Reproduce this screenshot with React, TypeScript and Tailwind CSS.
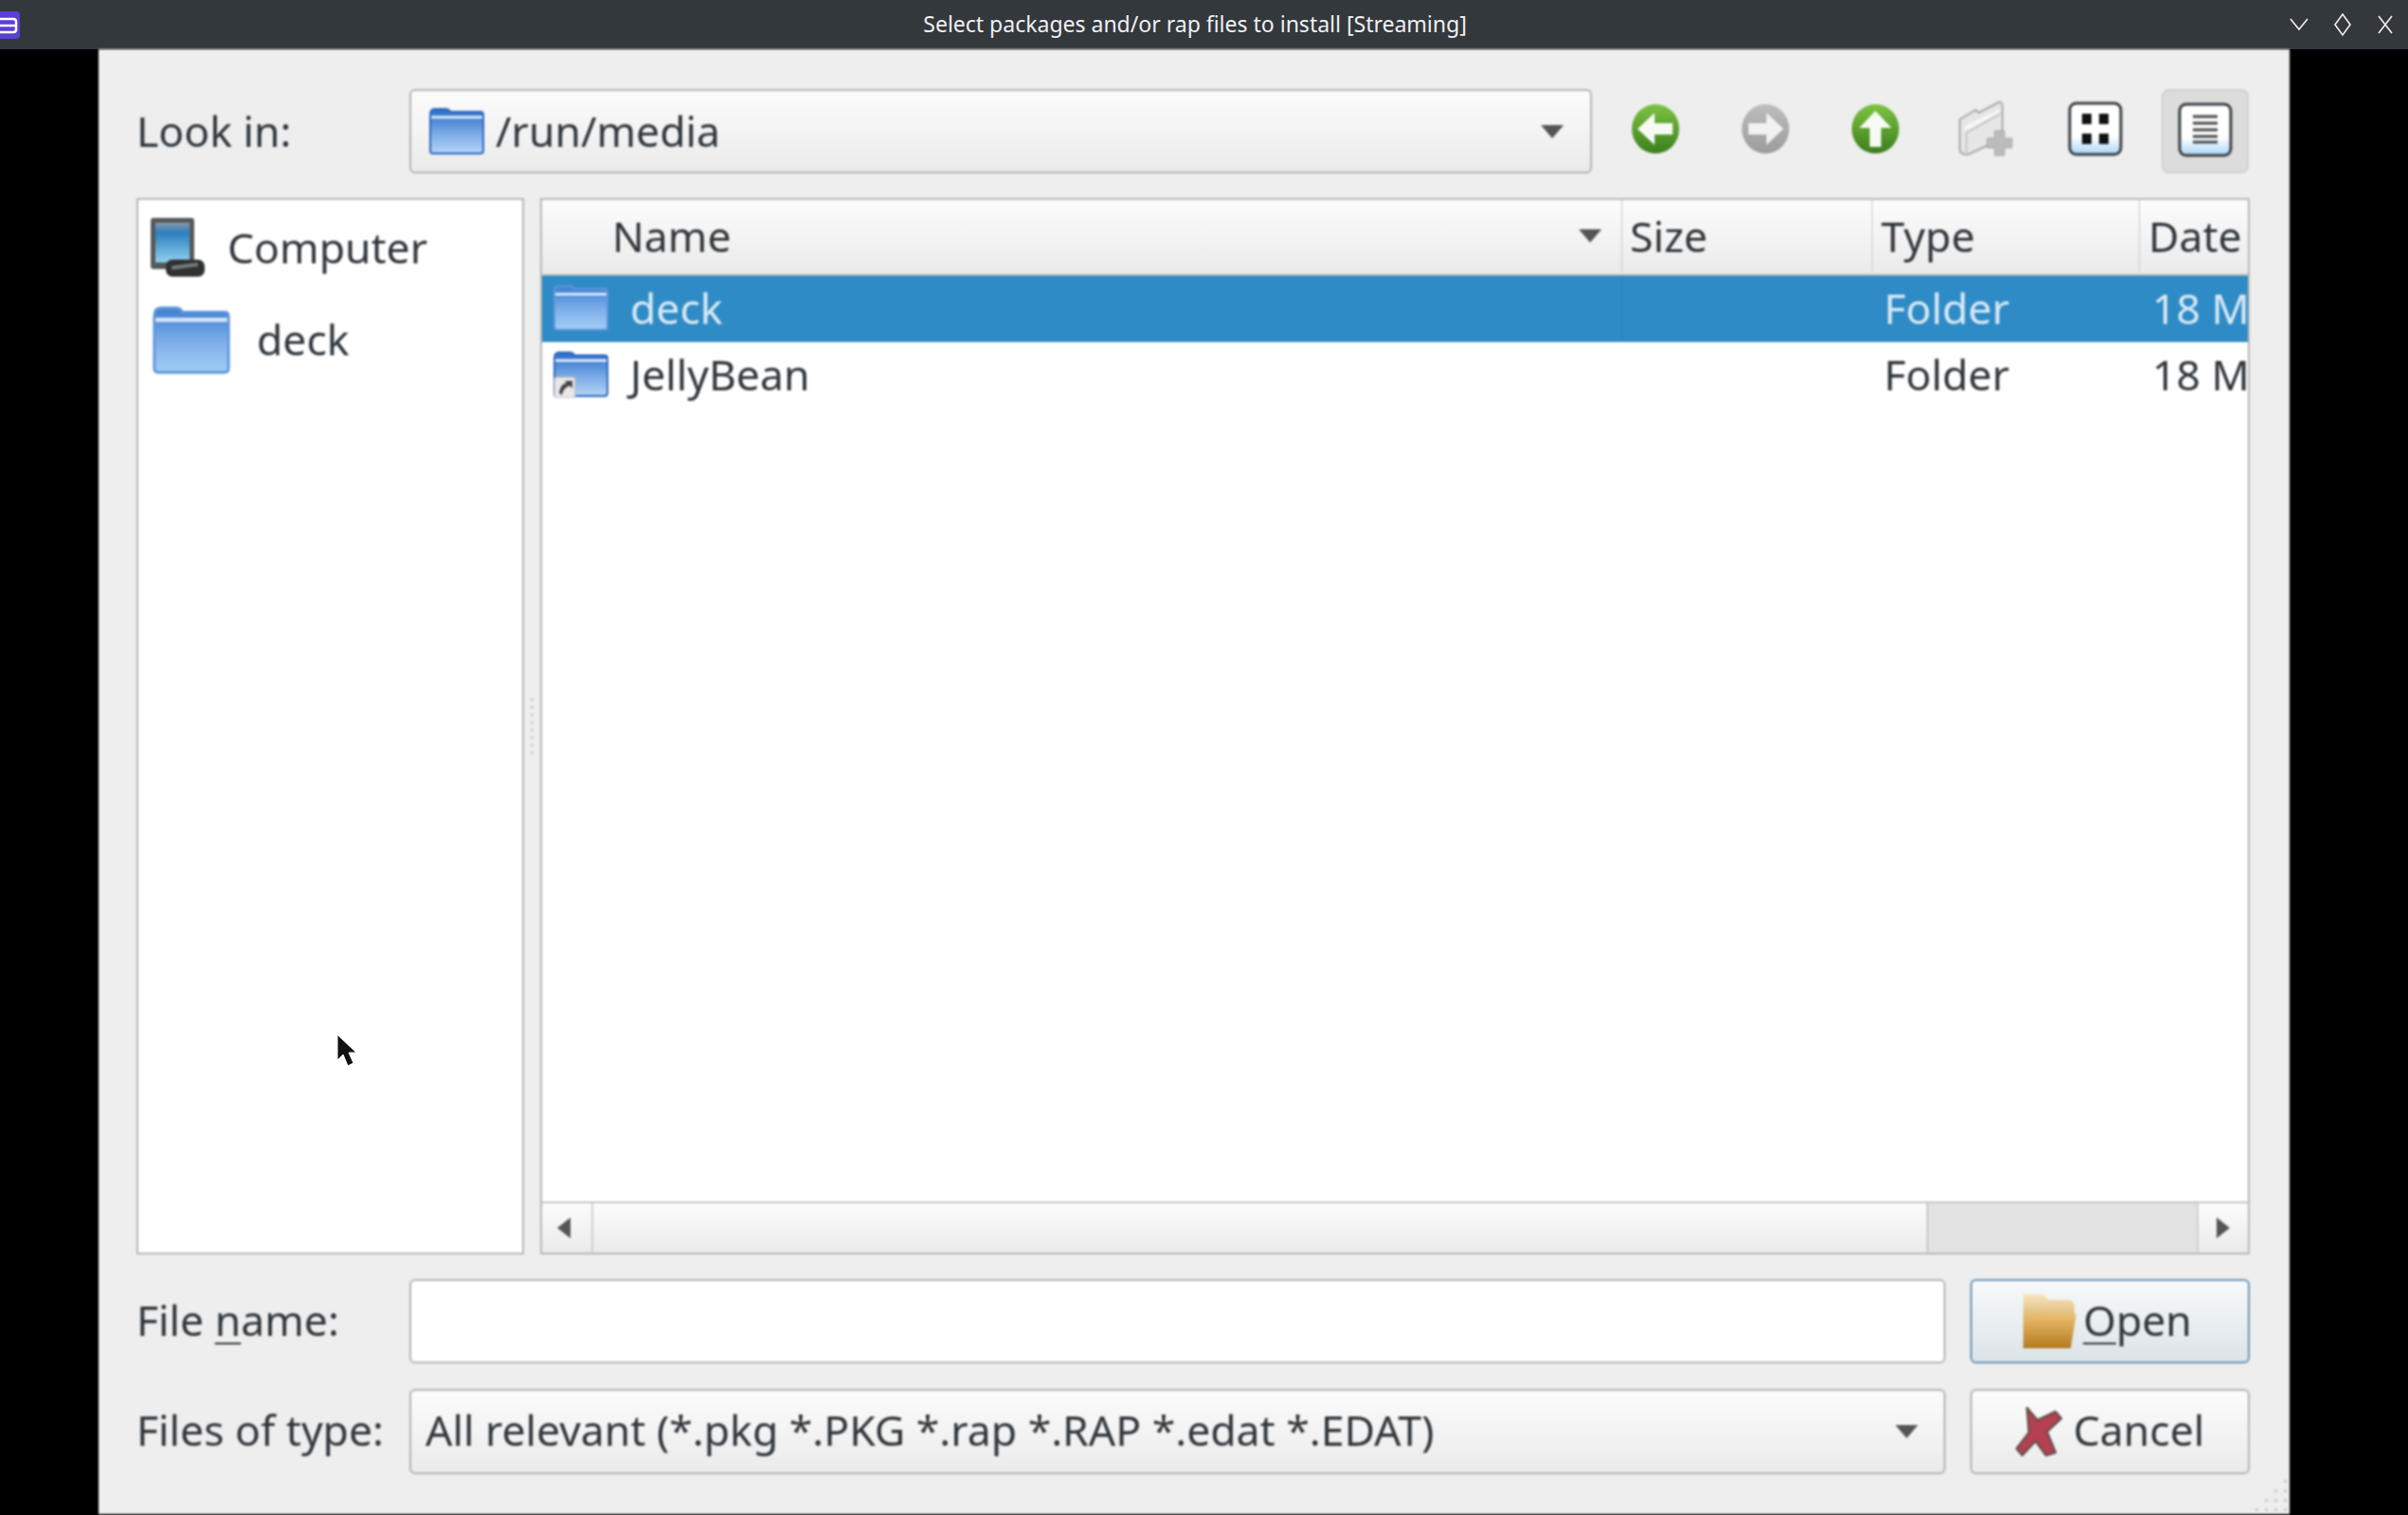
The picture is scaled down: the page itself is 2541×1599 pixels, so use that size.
import React from 'react';

const fontClass = "font-['Noto_Sans','Open_Sans',sans-serif]";

const Folder: React.FC<{ id: string; className: string; light?: boolean; link?: boolean }> = ({ id, className, light, link }) => (
  <svg viewBox="0 0 60 50" preserveAspectRatio="none" className={className}>
    <defs>
      <linearGradient id={id} x1="0" y1="0" x2="0" y2="1">
        <stop offset="0" stopColor={light ? '#3f7fd0' : '#2a6cc8'} />
        <stop offset="0.55" stopColor={light ? '#7fb0ea' : '#7aaae6'} />
        <stop offset="1" stopColor={light ? '#a4cdf6' : '#b5d4f6'} />
      </linearGradient>
    </defs>
    <path d="M2 8 Q2 2 7 2 H18 Q22 2 23 5 H55 Q58 5 58 8 V45 Q58 48 55 48 H5 Q2 48 2 45 Z" fill={`url(#${id})`} stroke={light ? '#5e96dc' : '#2f69bd'} strokeWidth="2" />
    <rect x="3" y="9" width="54" height="3" fill="#d5e6fa" />
    {link && (
      <g>
        <rect x="2" y="28" width="22" height="22" rx="2" fill="#e8e8e8" stroke="#b0b0b0" />
        <path d="M7 45 C8 38 11 35 15 34 L13 32 H21 V40 L18 37 C14 39 11 41 10 47 Z" fill="#444" />
      </g>
    )}
  </svg>
);

const ComputerIcon = () => (
  <svg viewBox="0 0 60 66" className="w-[60px] h-[66px]">
    <defs>
      <linearGradient id="screen" x1="0" y1="0" x2="0" y2="1">
        <stop offset="0" stopColor="#8a9aa5" />
        <stop offset="0.25" stopColor="#2c7fbf" />
        <stop offset="1" stopColor="#8fd0ee" />
      </linearGradient>
    </defs>
    <rect x="2" y="2" width="46" height="54" rx="3" fill="#55595b" />
    <rect x="7" y="7" width="36" height="42" fill="url(#screen)" />
    <rect x="18" y="46" width="41" height="18" rx="7" fill="#2f3133" />
    <rect x="24" y="51" width="28" height="4" fill="#77797a" transform="rotate(-8 37 53)" />
  </svg>
);

const RoundArrow: React.FC<{ id: string; dir: 'left' | 'right' | 'up'; gray?: boolean }> = ({ id, dir, gray }) => (
  <svg viewBox="0 0 52 54" className="w-[52px] h-[54px]">
    <defs>
      <linearGradient id={id} x1="0" y1="0" x2="0" y2="1">
        <stop offset="0" stopColor={gray ? '#bdbdbd' : '#7cc442'} />
        <stop offset="1" stopColor={gray ? '#9c9c9c' : '#3c7e1c'} />
      </linearGradient>
    </defs>
    <ellipse cx="26" cy="27" rx="25" ry="26" fill={`url(#${id})`} />
    {dir === 'left' && <path d="M7 27 L25 10 V21 H44 V33 H25 V44 Z" fill="#fff" opacity="0.95" />}
    {dir === 'right' && <path d="M45 27 L27 10 V21 H8 V33 H27 V44 Z" fill="#f2f2f2" />}
    {dir === 'up' && <path d="M26 8 L43 26 H32 V46 H20 V26 H9 Z" fill="#fff" opacity="0.95" />}
  </svg>
);

const NewFolderIcon = () => (
  <svg viewBox="0 0 60 60" className="w-[60px] h-[60px]">
    <path d="M3 20 L20 10 L23 13 L44 2 Q47 1 48 5 V40 L12 57 Q4 58 3 52 Z" fill="#e6e6e6" stroke="#ababab" strokeWidth="2" />
    <path d="M8 27 L45 9 V13 L8 33 Z" fill="#f6f6f6" />
    <path d="M10 55 V34 L46 14" fill="none" stroke="#bdbdbd" strokeWidth="1.5" />
    <path d="M40 32 H50 V40 H58 V50 H50 V58 H40 V50 H32 V40 H40 Z" fill="#bcbcbc" stroke="#a2a2a2" />
  </svg>
);

const ViewIcon: React.FC<{ id: string; list?: boolean }> = ({ id, list }) => (
  <svg viewBox="0 0 58 58" className="w-[58px] h-[58px]">
    <defs>
      <linearGradient id={id} x1="0" y1="0" x2="0" y2="1">
        <stop offset="0" stopColor="#ffffff" />
        <stop offset="0.65" stopColor="#ffffff" />
        <stop offset="1" stopColor="#a9d5f8" />
      </linearGradient>
    </defs>
    <rect x="2" y="2" width="54" height="54" rx="7" fill={`url(#${id})`} stroke="#3c4246" strokeWidth="3" />
    {list ? (
      <path d="M16 15 H42 M16 22 H42 M16 29 H42 M16 36 H42 M16 42 H42" stroke="#4a4a4a" strokeWidth="3" />
    ) : (
      <path d="M15 13 H25 V24 H15 Z M33 13 H43 V24 H33 Z M15 34 H25 V45 H15 Z M33 34 H43 V45 H33 Z" fill="#111" />
    )}
  </svg>
);

const DownArrow = () => (
  <svg viewBox="0 0 26 16" className="w-[26px] h-[16px] shrink-0">
    <path d="M1 1 H25 L13 15 Z" fill="#555" />
  </svg>
);

const OpenIcon = () => (
  <svg viewBox="0 0 58 60" className="w-[58px] h-[60px] shrink-0">
    <defs>
      <linearGradient id="openBack" x1="0" y1="0" x2="0" y2="1">
        <stop offset="0" stopColor="#f6e6bf" />
        <stop offset="1" stopColor="#dcae62" />
      </linearGradient>
      <linearGradient id="openFront" x1="0" y1="0" x2="0" y2="1">
        <stop offset="0" stopColor="#ecc072" />
        <stop offset="1" stopColor="#b67a1e" />
      </linearGradient>
    </defs>
    <path d="M1 1 H22 L28 7 H50 Q55 8 55 14 V30 H1 Z" fill="url(#openBack)" />
    <path d="M1 58 V30 Q14 22 24 22 H57 L51 58 Z" fill="url(#openFront)" />
  </svg>
);

const CancelIcon = () => (
  <svg viewBox="0 0 50 54" className="w-[50px] h-[54px] shrink-0">
    <path d="M12 2 L23 15 L42 6 L48 13 L33 27 L42 49 L32 52 L21 37 L7 52 L1 45 L14 28 Z" fill="#b5404f" stroke="#6d5050" strokeWidth="2.5" strokeLinejoin="round" />
  </svg>
);

const FileRow: React.FC<{ name: string; selected?: boolean; link?: boolean; id: string }> = ({ name, selected, link, id }) => (
  <div className={`flex h-[70px] items-center pb-[2px] ${selected ? 'bg-[#2e8bc6] text-[#d9e9f4]' : 'text-[#31363b]'}`}>
    <div className={`w-[1140px] flex items-center h-full pl-[11px] ${selected ? 'border-r border-[#2a80b8]' : ''}`}>
      <Folder id={id} className="w-[60px] h-[50px] shrink-0" light={selected} link={link} />
      <span className={selected ? 'ml-[22px]' : 'ml-[22px]'}>{name}</span>
    </div>
    <div className="w-[264px]" />
    <div className="w-[282px] pl-[12px]">Folder</div>
    <div className="flex-1 overflow-hidden whitespace-nowrap pl-[13px]">18 M</div>
  </div>
);

const HeaderCell: React.FC<{ className: string; children?: React.ReactNode }> = ({ className, children }) => (
  <div className={`flex items-center h-full border-r border-[#c8c8c8] ${className}`}>{children}</div>
);

const App: React.FC = () => {
  return (
    <div className={`h-screen w-full overflow-hidden bg-black flex flex-col text-[44.5px] text-[#31363b] ${fontClass}`}>
      {/* title bar */}
      <div className="h-[52px] shrink-0 bg-[#33383d] flex items-center relative">
        <svg viewBox="0 0 21 29" className="w-[21px] h-[29px] shrink-0">
          <path d="M0 0 H17 Q21 0 21 4 V25 Q21 29 17 29 H0 Z" fill="#5a3fd4" />
          <path d="M0 8 H14 Q17 8 17 11 V19 Q17 22 14 22 H0 M0 15 H17" fill="none" stroke="#fff" strokeWidth="2.5" />
        </svg>
        <div className="flex-1 text-center text-[23px] text-[#eff0f1] pl-[85px] pb-[2px]">Select packages and/or rap files to install [Streaming]</div>
        <div className="flex items-center gap-[26px] pr-[15px]">
          <svg viewBox="0 0 20 14" className="w-[20px] h-[14px]"><path d="M1 1 L10 12 L19 1" fill="none" stroke="#eff0f1" strokeWidth="1.6" /></svg>
          <svg viewBox="0 0 20 26" className="w-[20px] h-[26px]"><path d="M10 2 L18 13 L10 24 L2 13 Z" fill="none" stroke="#eff0f1" strokeWidth="1.6" /></svg>
          <svg viewBox="0 0 18 20" className="w-[18px] h-[20px]"><path d="M2 1 L16 19 M16 1 L2 19" fill="none" stroke="#eff0f1" strokeWidth="1.6" /></svg>
        </div>
      </div>

      <div className="flex-1 min-h-0 pl-[104px] pr-[125px] pb-px">
        {/* dialog */}
        <div className="relative h-full bg-[#eeeeee] pl-[40px] pr-[42px] pt-[42px] flex flex-col blur-[0.8px]">
          {/* look in row */}
          <div className="flex items-center h-[89px] shrink-0">
            <div className="w-[288px]">Look in:</div>
            <div className="w-[1248px] h-full rounded-[6px] border-2 border-[#b4b4b4] bg-gradient-to-b from-[#fcfcfc] to-[#ebebeb] flex items-center pl-[18px] pr-[27px]">
              <Folder id="lookFolder" className="w-[60px] h-[51px] shrink-0" />
              <span className="ml-[11px] flex-1">/run/media</span>
              <DownArrow />
            </div>
            <div className="ml-[21px] flex gap-[24px] h-full">
              <div className="w-[92px] flex items-center justify-center pb-[5px]"><RoundArrow id="back" dir="left" /></div>
              <div className="w-[92px] flex items-center justify-center pb-[5px]"><RoundArrow id="forward" dir="right" gray /></div>
              <div className="w-[92px] flex items-center justify-center pb-[5px]"><RoundArrow id="up" dir="up" /></div>
              <div className="w-[92px] flex items-center justify-center pb-[5px]"><NewFolderIcon /></div>
              <div className="w-[92px] flex items-center justify-center pb-[5px]"><ViewIcon id="iconView" /></div>
              <div className="w-[92px] flex items-center justify-center pb-[4px] rounded-[8px] border-2 border-[#cfcfcf] bg-[#dcdcdc]"><ViewIcon id="listView" list /></div>
            </div>
          </div>

          {/* panes */}
          <div className="mt-[26px] flex h-[1115px] shrink-0">
            <div className="w-[409px] shrink-0 border-2 border-[#b8b8b8] bg-white pl-[11px] pt-[17px]">
              <div className="flex items-center h-[66px]">
                <ComputerIcon />
                <span className="ml-[23px]">Computer</span>
              </div>
              <div className="flex items-center mt-[28px] pl-[3px]">
                <Folder id="sideDeck" className="w-[84px] h-[74px]" light />
                <span className="ml-[27px] pb-[2px]">deck</span>
              </div>
            </div>
            <div className="w-[17px] shrink-0 flex flex-col justify-center items-center gap-[5px]">
              {Array.from({ length: 8 }).map((_, i) => (
                <div key={i} className="w-[3px] h-[3px] rounded-full bg-[#c4c4c4]" />
              ))}
            </div>
            <div className="flex-1 border-2 border-[#b8b8b8] bg-white flex flex-col min-w-0">
              <div className="flex h-[80px] shrink-0 items-center pb-[2px] bg-gradient-to-b from-[#fcfcfc] to-[#ebebeb] border-b-2 border-[#c0c0c0]">
                <HeaderCell className="w-[1140px] pl-[74px] pr-[20px] justify-between">
                  <span>Name</span>
                  <DownArrow />
                </HeaderCell>
                <HeaderCell className="w-[264px] pl-[8px]">Size</HeaderCell>
                <HeaderCell className="w-[282px] pl-[9px]">Type</HeaderCell>
                <div className="flex-1 pl-[9px] overflow-hidden whitespace-nowrap">Date</div>
              </div>
              <FileRow id="rowDeck" name="deck" selected />
              <FileRow id="rowJelly" name="JellyBean" link />
              <div className="flex-1" />
              {/* scrollbar */}
              <div className="flex h-[54px] shrink-0 border-t-2 border-[#c6c6c6]">
                <div className="w-[54px] flex items-center justify-center pr-[6px] border-r-2 border-[#d0d0d0] bg-gradient-to-b from-[#fcfcfc] to-[#ebebeb]">
                  <svg viewBox="0 0 14 22" className="w-[14px] h-[22px]"><path d="M14 0 V22 L0 11 Z" fill="#555" /></svg>
                </div>
                <div className="w-[1407px] bg-gradient-to-b from-[#fcfcfc] to-[#ebebeb]" />
                <div className="flex-1 bg-[#e3e3e3] border-l-2 border-[#c6c6c6]" />
                <div className="w-[54px] flex items-center justify-center border-l-2 border-[#d0d0d0] bg-gradient-to-b from-[#fcfcfc] to-[#ebebeb]">
                  <svg viewBox="0 0 14 22" className="w-[14px] h-[22px]"><path d="M0 0 V22 L14 11 Z" fill="#555" /></svg>
                </div>
              </div>
            </div>
          </div>

          {/* file name row */}
          <div className="mt-[26px] flex items-center h-[89px] shrink-0">
            <div className="w-[288px] pb-[2px]">File <span className="underline underline-offset-[7px] decoration-2">n</span>ame:</div>
            <div className="w-[1621px] h-full rounded-[6px] border-2 border-[#b4b4b4] bg-white" />
            <div className="ml-[26px] flex-1 h-full rounded-[6px] border-2 border-[#6b93b5] bg-gradient-to-b from-[#f8fafa] to-[#dce4e9] flex items-center justify-center gap-[6px] pr-[6px]">
              <OpenIcon />
              <span className="pb-[2px]"><span className="underline underline-offset-[7px] decoration-2">O</span>pen</span>
            </div>
          </div>

          {/* file type row */}
          <div className="mt-[27px] flex items-center h-[90px] shrink-0">
            <div className="w-[288px] whitespace-nowrap pb-[3px]">Files of type:</div>
            <div className="w-[1621px] h-full rounded-[6px] border-2 border-[#b4b4b4] bg-gradient-to-b from-[#fcfcfc] to-[#ebebeb] flex items-center pl-[15px] pr-[26px]">
              <span className="flex-1 whitespace-nowrap pb-[3px]">All relevant (*.pkg *.PKG *.rap *.RAP *.edat *.EDAT)</span>
              <DownArrow />
            </div>
            <div className="ml-[26px] flex-1 h-full rounded-[6px] border-2 border-[#b4b4b4] bg-gradient-to-b from-[#fcfcfc] to-[#ebebeb] flex items-center justify-center gap-[11px]">
              <CancelIcon />
              <span className="pb-[3px]">Cancel</span>
            </div>
          </div>

          {/* size grip */}
          <div className="absolute right-[3px] bottom-[3px] grid grid-cols-4 gap-[7px]">
            {[0, 0, 0, 1, 0, 0, 1, 1, 0, 1, 1, 1, 1, 1, 1, 1].map((on, i) => (
              <div key={i} className={`w-[3px] h-[3px] ${on ? 'bg-[#c9c9c9]' : ''}`} />
            ))}
          </div>
        </div>
      </div>

      {/* mouse pointer */}
      <svg viewBox="0 0 22 36" className="absolute left-[355px] top-[1091px] w-[22px] h-[36px]">
        <path d="M1 1 V28 L7 22 L12 34 L18 31 L13 20 H21 Z" fill="#111" stroke="#fff" strokeWidth="1" />
      </svg>
    </div>
  );
};

export default App;
